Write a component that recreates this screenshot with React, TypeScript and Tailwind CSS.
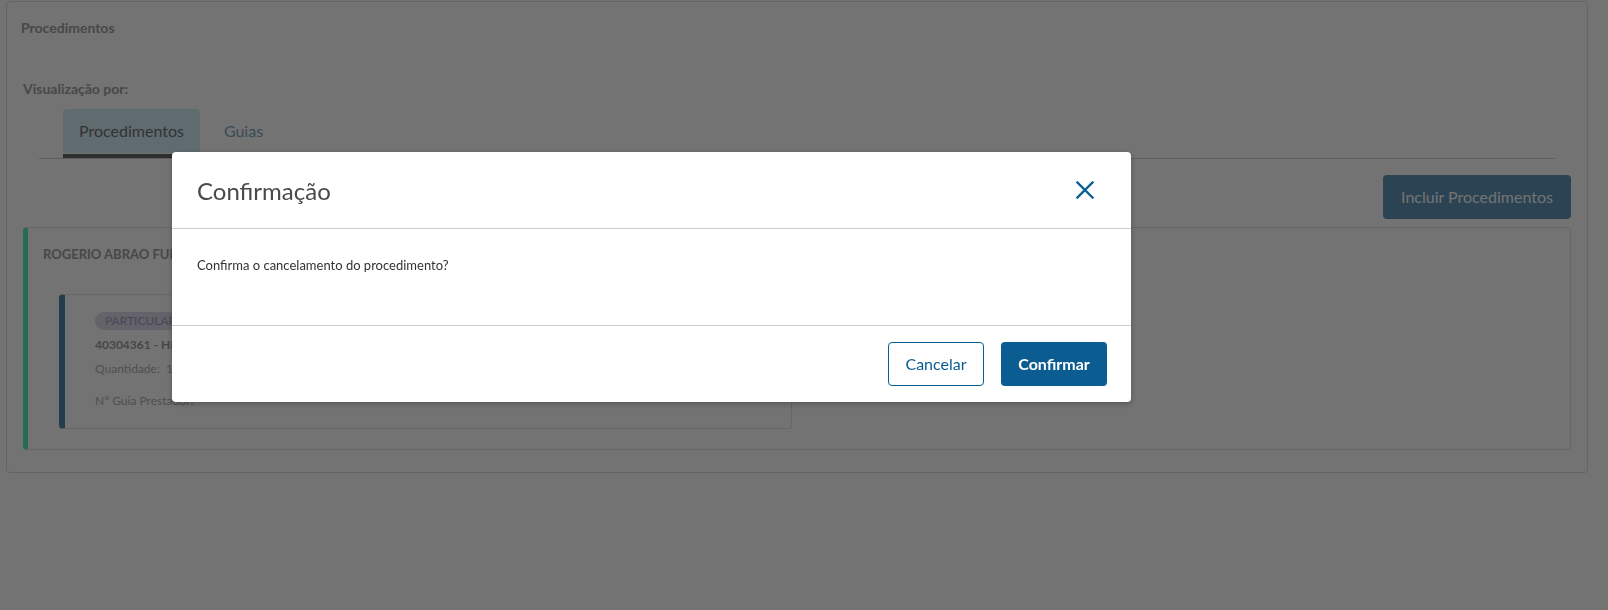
import { useState } from 'react'

function CloseIcon() {
  return (
    <svg width="18" height="18" viewBox="0 0 18 18" fill="none">
      <path d="M1.5 1.5L16.5 16.5M16.5 1.5L1.5 16.5" stroke="#0a5c91" strokeWidth="2.3" strokeLinecap="square" />
    </svg>
  )
}

export default function App() {
  const [tab, setTab] = useState<'procedimentos' | 'guias'>('procedimentos')
  const [open, setOpen] = useState(true)

  return (
    <div className="relative min-h-[610px] bg-white font-['Lato','Noto_Sans',sans-serif]">
      {/* page behind the modal */}
      <div className="pl-[6px] pr-[20px] pt-px">
        <div className="rounded border border-[#dedede] px-4 pb-[22px]">
          <h2 className="-ml-0.5 pt-[18px] text-[14px] leading-4 font-bold text-[#a0a0a0]">Procedimentos</h2>

          <p className="mt-[45px] text-[14px] leading-4 font-bold text-[#a0a0a0]">Visualização por:</p>

          <div className="mx-4 mt-3 flex border-b border-[#d0d0d0] pl-6">
            <button
              onClick={() => setTab('procedimentos')}
              className={`flex flex-col border-b-4 ${tab === 'procedimentos' ? 'border-[#666]' : 'border-transparent'}`}
            >
              <span
                className={`mb-px flex h-11 items-center rounded-t px-4 text-[16px] ${
                  tab === 'procedimentos' ? 'bg-[#d4eef9] text-[#717171]' : 'text-[#7fa8c4]'
                }`}
              >
                Procedimentos
              </span>
            </button>
            <button
              onClick={() => setTab('guias')}
              className={`ml-2 flex flex-col border-b-4 ${tab === 'guias' ? 'border-[#666]' : 'border-transparent'}`}
            >
              <span
                className={`mb-px flex h-11 items-center rounded-t px-4 text-[16px] ${
                  tab === 'guias' ? 'bg-[#d4eef9] text-[#717171]' : 'text-[#7fa8c4]'
                }`}
              >
                Guias
              </span>
            </button>
          </div>

          <div className="mt-4 flex justify-end">
            <button className="h-11 w-[188px] rounded bg-[#0a5c91] text-[16px] text-white opacity-65">Incluir Procedimentos</button>
          </div>

          <div className="mt-2 rounded border border-l-[5px] border-[#e3e3e3] border-l-[#5aebc4] pl-[15px] pt-[18px] pb-5">
            <p className="text-[13px] leading-4 font-bold text-[#9e9e9e]">ROGERIO ABRAO FURTADO</p>

            <div className="mt-8 ml-4 w-[733px] rounded border border-l-[6px] border-[#e3e3e3] border-l-[#5085a7] pl-[30px] pt-[17px] pb-[19px]">
              <div className="flex">
                <span className="flex h-[18px] items-center rounded-full bg-[#dcdce8] px-2.5 text-[12px] text-[#a49cc4]">PARTICULAR</span>
              </div>
              <p className="mt-[7px] text-[12px] leading-4 font-bold text-[#9e9e9e]">40304361 - HEMOGRAMA COM CONTAGEM DE PLAQUETAS</p>
              <p className="mt-2 text-[12px] leading-4 text-[#b0b0b0]">Quantidade:&nbsp;&nbsp;1</p>
              <p className="mt-4 text-[12px] leading-4 text-[#b0b0b0]">N° Guia Prestador:</p>
            </div>
          </div>
        </div>
      </div>

      {/* modal */}
      {open && (
        <div className="fixed inset-0 bg-black/55">
          <div className="ml-[172px] mt-[152px] w-[959px] rounded bg-white shadow-[0_2px_6px_rgba(0,0,0,0.25)]">
            <div className="flex h-[77px] items-center justify-between border-b border-[#cdcdcd] pl-[25px] pr-[37px]">
              <h3 className="pt-0.5 text-[24px] font-normal text-[#4a4a4a]">Confirmação</h3>
              <button onClick={() => setOpen(false)} className="flex items-center">
                <CloseIcon />
              </button>
            </div>
            <div className="h-[97px] border-b border-[#cdcdcd] pl-[25px] pt-[28px]">
              <p className="text-[13px] leading-4 text-[#333]">Confirma o cancelamento do procedimento?</p>
            </div>
            <div className="flex h-[76px] items-center justify-end gap-[17px] pr-6">
              <button onClick={() => setOpen(false)} className="h-11 w-24 rounded border border-[#0a5c91] text-[16px] text-[#0a5c91]">
                Cancelar
              </button>
              <button onClick={() => setOpen(false)} className="h-11 w-[106px] rounded bg-[#0a5c91] text-[16px] font-bold text-white">
                Confirmar
              </button>
            </div>
          </div>
        </div>
      )}
    </div>
  )
}
